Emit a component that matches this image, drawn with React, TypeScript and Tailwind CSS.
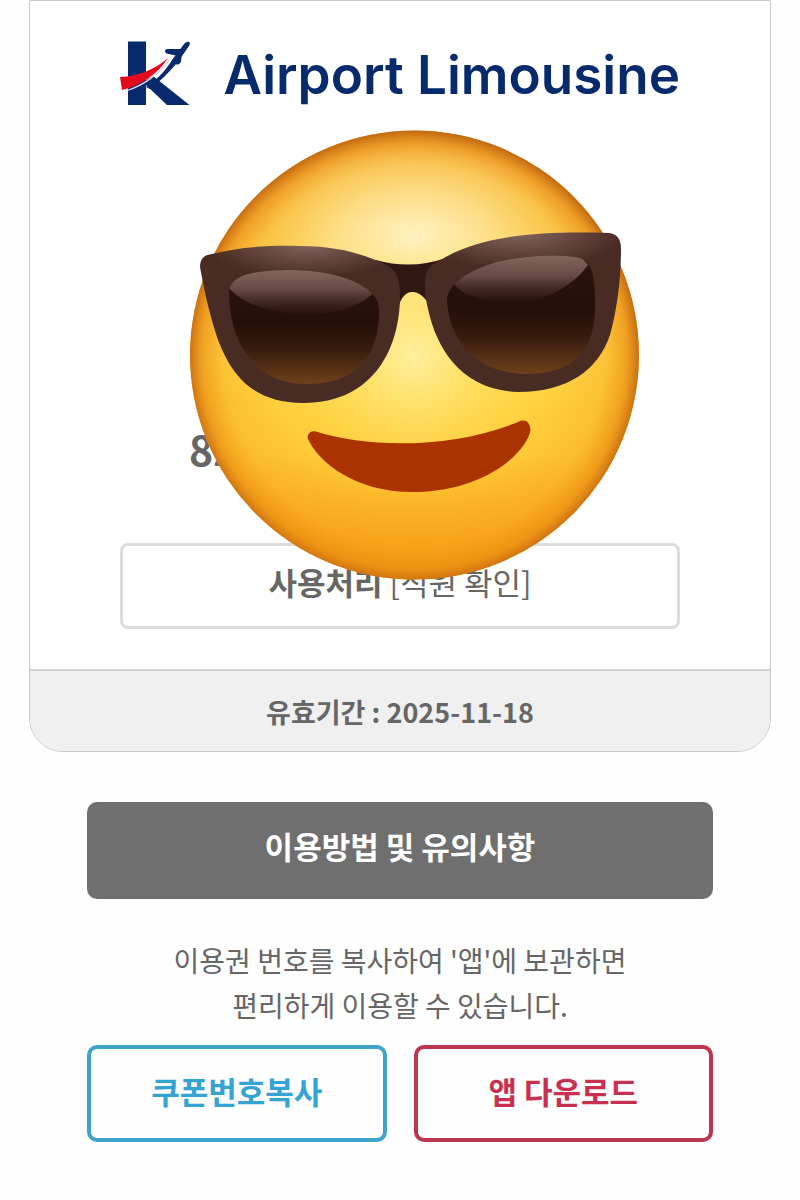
function LogoMark() {
  return (
    <svg viewBox="120 38 72 70" className="h-[70px] w-[72px] shrink-0" aria-hidden="true">
      <path d="M128 41.500H146V80L153 76L189.500 105H167L146 85V105H128Z" fill="#062a6b" />
      <path d="M120 77C138 76 154 70 168 58C158 74 140 86 122 90Z" fill="#e30b1c" />
      <path d="M146 87C158 79 166 70 172 60L184.500 43.500C188 40 191.500 42 189 46L180 59C170 72 160 81 150 89Z" fill="#062a6b" />
      <path d="M178 56L166.500 53.500Q163 50 167 49L184 49ZM182 50L181 62Q178 66 176 64L176 56Z" fill="#062a6b" />
      <path d="M126 91C144 85 159 74 169.500 60" fill="none" stroke="#dcd8ec" strokeWidth="1.300" />
    </svg>
  );
}

function SunglassesFace() {
  const leftFrame =
    "M200 267Q200 255 212 254C238 247 270 245 300 246C340 246 364 255 385 264C397 270 400 279 400 296C400 345 376 403 303 403C249 403 229 370 217 337C207 306 203 283 200 267Z";
  const rightFrame =
    "M425 281Q425 267 439 261C480 235 540 231 609 233Q621 234 621 249C621 275 618 306 610 335C598 370 568 392 518 392C462 390 437 350 428 309Q424 292 425 281Z";
  const leftLens =
    "M229 291C231 274 257 270 292 270C334 270 377 284 379 308C380 351 361 384 306 384C258 384 229 346 229 291Z";
  const rightLens =
    "M447 302C446 285 468 270 500 261C536 254 574 254 584 260C593 266 595 280 595 302C596 347 578 373 527 374C478 374 450 342 447 302Z";
  return (
    <svg viewBox="185 125 460 460" className="h-[460px] w-[460px]" role="img" aria-label="선글라스를 쓴 웃는 얼굴">
      <defs>
        <linearGradient id="face" x1="0" y1="0" x2="0" y2="1">
          <stop offset="0" stopColor="#fbd06a" />
          <stop offset="0.5" stopColor="#ffd748" />
          <stop offset="0.72" stopColor="#ffcb38" />
          <stop offset="1" stopColor="#f79a12" />
        </linearGradient>
        <radialGradient id="edge" cx="414" cy="357" r="226" gradientUnits="userSpaceOnUse">
          <stop offset="0.6" stopColor="#f49a10" stopOpacity="0" />
          <stop offset="0.84" stopColor="#f49a10" stopOpacity="0.3" />
          <stop offset="0.94" stopColor="#ea8a10" stopOpacity="0.7" />
          <stop offset="1" stopColor="#c46a12" />
        </radialGradient>
        <radialGradient id="shine" cx="414" cy="240" r="150" gradientTransform="matrix(1 0 0 .64 0 86.4)" gradientUnits="userSpaceOnUse">
          <stop offset="0" stopColor="#fff4cc" />
          <stop offset="0.5" stopColor="#fde7a2" stopOpacity="0.65" />
          <stop offset="1" stopColor="#fdd870" stopOpacity="0" />
        </radialGradient>
        <radialGradient id="glow" cx="414" cy="355" r="130" gradientUnits="userSpaceOnUse">
          <stop offset="0" stopColor="#fff0a0" />
          <stop offset="1" stopColor="#ffe05a" stopOpacity="0" />
        </radialGradient>
        <linearGradient id="lens" x1="0" y1="0" x2="0" y2="1">
          <stop offset="0" stopColor="#2b150e" />
          <stop offset="0.45" stopColor="#250f09" />
          <stop offset="0.68" stopColor="#351a0d" />
          <stop offset="1" stopColor="#6f411b" />
        </linearGradient>
        <linearGradient id="glare" x1="0" y1="0" x2="0" y2="1">
          <stop offset="0" stopColor="#8d6e67" />
          <stop offset="0.5" stopColor="#72544d" stopOpacity="0.85" />
          <stop offset="1" stopColor="#4a2d25" stopOpacity="0.1" />
        </linearGradient>
        <radialGradient id="frameL" cx="307" cy="243" r="100" gradientTransform="matrix(1 0 0 .35 0 158)" gradientUnits="userSpaceOnUse">
          <stop offset="0" stopColor="#84645e" />
          <stop offset="1" stopColor="#482b22" />
        </radialGradient>
        <radialGradient id="frameR" cx="520" cy="233" r="105" gradientTransform="matrix(1 0 0 .35 0 151)" gradientUnits="userSpaceOnUse">
          <stop offset="0" stopColor="#84645e" />
          <stop offset="1" stopColor="#482b22" />
        </radialGradient>
        <clipPath id="clipL">
          <path d={leftLens} />
        </clipPath>
        <clipPath id="clipR">
          <path d={rightLens} />
        </clipPath>
      </defs>
      <circle cx="414.500" cy="355" r="224.500" fill="url(#face)" />
      <circle cx="414.500" cy="355" r="224.500" fill="url(#edge)" />
      <ellipse cx="414" cy="240" rx="150" ry="96" fill="url(#shine)" />
      <circle cx="414" cy="355" r="130" fill="url(#glow)" />
      <path d="M376 260Q411 270 446 258L432 308Q421 291 412 292Q401 292 396 315Z" fill="#311711" />
      <path d={leftFrame} fill="url(#frameL)" />
      <path d={rightFrame} fill="url(#frameR)" />
      <path d={leftLens} fill="url(#lens)" />
      <path d={rightLens} fill="url(#lens)" />
      <path d="M229 288C248 311 300 319 333 312Q363 306 376 290L350 265H229Z" fill="url(#glare)" clipPath="url(#clipL)" />
      <path d="M453 283C467 302 508 307 542 298Q572 287 588 265L575 250H453Z" fill="url(#glare)" clipPath="url(#clipR)" />
      <path d="M307.500 438Q308 430 316 431.500C370 449 455 448 518 422Q529 417 530.500 430C527 452 485 492 412 492C355 492 318 462 307.500 438Z" fill="#ab3300" />
    </svg>
  );
}

export default function App() {
  return (
    <main className="min-h-screen bg-[#fefefe] px-[29px] pb-14 font-['Noto_Sans_CJK_KR',sans-serif] text-[#666]">
      <section className="relative overflow-hidden rounded-b-[34px] border border-[#c8c8c8] bg-white">
        <div className="flex flex-col px-[90px] pt-[37px] pb-10">
          <header className="flex h-[70px] items-center justify-between">
            <LogoMark />
            <h1 className="pt-1 font-['Inter',sans-serif] text-[53px] leading-[70px] font-semibold whitespace-nowrap text-[#062a6b]">
              Airport Limousine
            </h1>
          </header>
          <p className="mt-[310px] pl-[69px] text-[41px] leading-[60px] font-bold">82</p>
          <button type="button" className="mt-[65px] h-[86px] rounded-lg border-[3px] border-[#dcdcdc] pb-2 text-[31px] leading-10">
            <strong className="font-bold">사용처리</strong> [직원 확인]
          </button>
        </div>
        <div className="pointer-events-none absolute top-[124px] left-1/2 -ml-[215px]">
          <SunglassesFace />
        </div>
        <footer className="border-t-2 border-[#cfcfcf] bg-[#f0f0f0] pt-[21px] pb-[19px] text-center text-[27px] leading-10 font-bold">
          유효기간 : 2025-11-18
        </footer>
      </section>

      <div className="mt-[50px] px-[58px]">
        <button type="button" className="h-[97px] w-full rounded-[10px] bg-[#6f6f6f] pb-2 text-[31px] font-bold text-white">
          이용방법 및 유의사항
        </button>
        <p className="mt-[39px] text-center text-[28px] leading-[45px]">
          이용권 번호를 복사하여 '앱'에 보관하면
          <br />
          편리하게 이용할 수 있습니다.
        </p>
        <div className="mt-[17px] grid grid-cols-2 gap-[27px] text-[31px] font-bold">
          <button type="button" className="h-[97px] rounded-[10px] border-4 border-[#3fa4cb] pb-1 text-[#36a4d2]">
            쿠폰번호복사
          </button>
          <button type="button" className="h-[97px] rounded-[10px] border-4 border-[#bd3650] pb-1 text-[#c9304f]">
            앱 다운로드
          </button>
        </div>
      </div>
    </main>
  );
}
